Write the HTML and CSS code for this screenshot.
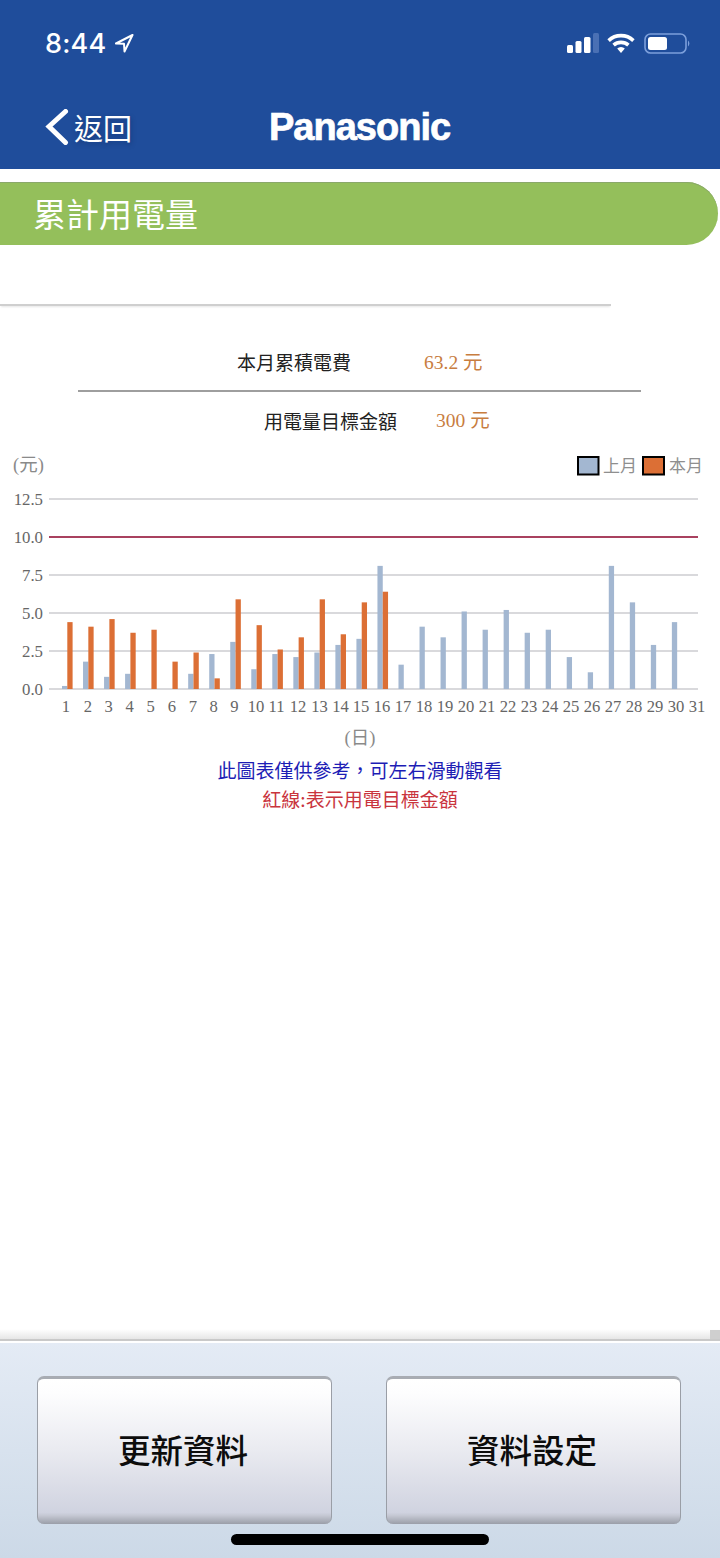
FILE: index.html
```html
<!DOCTYPE html>
<html lang="zh-Hant">
<head>
<meta charset="utf-8">
<title>累計用電量</title>
<link rel="stylesheet" href="styles.css">
</head>
<body>
<div class="app">
  <header class="header">
    <div class="status">
      <div class="status-left">
        <span class="time">8:44</span>
        <svg class="loc" width="20" height="19" viewBox="0 0 20 19"><path d="M18.5 1 L2 9.5 L10 9.8 L10.5 17.5 Z"/></svg>
      </div>
      <div class="status-right">
        <svg class="signal" width="33" height="20" viewBox="0 0 33 20">
          <rect class="on" x="1" y="12" width="6" height="8" rx="1.5"/>
          <rect class="on" x="9.5" y="8" width="6" height="12" rx="1.5"/>
          <rect class="on" x="18" y="4" width="6.5" height="16" rx="1.5"/>
          <rect class="off" x="27" y="0" width="6" height="20" rx="1.5"/>
        </svg>
        <svg class="wifi" width="28" height="20" viewBox="0 0 28 20">
          <path class="arc" d="M1.6 7.6 A18 18 0 0 1 26.4 7.6"/>
          <path class="arc" d="M6.6 12.2 A11 11 0 0 1 21.4 12.2"/>
          <path class="dot" d="M10.2 15.6 L14 20 L17.8 15.6 A5.5 5.5 0 0 0 10.2 15.6 Z"/>
        </svg>
        <svg class="battery" width="47" height="21" viewBox="0 0 47 21">
          <rect class="shell" x="1" y="1" width="41" height="19" rx="5.5"/>
          <rect class="fill" x="4" y="4" width="19" height="13" rx="2.5"/>
          <path class="nub" d="M44 7.5 A4 4 0 0 1 44 13.5 Z"/>
        </svg>
      </div>
    </div>
    <nav class="nav">
      <div class="back">
        <svg class="chevron" width="24" height="36" viewBox="0 0 24 36"><path d="M20.5 2.5 L4 17.5 L20.5 33.5"/></svg>
        <span class="back-text">返回</span>
      </div>
      <div class="logo">Panasonic</div>
    </nav>
  </header>

  <main class="main">
    <h1 class="title">累計用電量</h1>
    <div class="panel"></div>
    <div class="summary">
      <div class="row row-first">
        <span class="label">本月累積電費</span>
        <span class="value">63.2 元</span>
      </div>
      <div class="rule"></div>
      <div class="row row-second">
        <span class="label">用電量目標金額</span>
        <span class="value">300 元</span>
      </div>
    </div>

    <svg class="chart" width="720" height="300" viewBox="0 450 720 300">
      <text class="axis-title" x="13" y="471">(元)</text>

      <rect class="swatch swatch-last" x="578" y="457" width="20.5" height="17.5"/>
      <text class="legend" x="603" y="472">上月</text>
      <rect class="swatch swatch-this" x="643" y="457" width="21" height="17.5"/>
      <text class="legend" x="669" y="472">本月</text>

      <line class="grid" x1="49" x2="698" y1="499" y2="499"/>
      <line class="goal" x1="49" x2="698" y1="537" y2="537"/>
      <line class="grid" x1="49" x2="698" y1="575" y2="575"/>
      <line class="grid" x1="49" x2="698" y1="613" y2="613"/>
      <line class="grid" x1="49" x2="698" y1="651" y2="651"/>
      <line class="grid" x1="49" x2="698" y1="689" y2="689"/>

      <text class="tick-y" x="43" y="505">12.5</text>
      <text class="tick-y" x="43" y="543">10.0</text>
      <text class="tick-y" x="43" y="581">7.5</text>
      <text class="tick-y" x="43" y="619">5.0</text>
      <text class="tick-y" x="43" y="657">2.5</text>
      <text class="tick-y" x="43" y="695">0.0</text>

      <g transform="translate(62 689) scale(21.03 -15.2)">
        <g class="bars-last">
          <rect x="0" y="0" width=".252" height="0.2"/>
          <rect x="1" y="0" width=".252" height="1.8"/>
          <rect x="2" y="0" width=".252" height="0.8"/>
          <rect x="3" y="0" width=".252" height="1.0"/>
          <rect x="6" y="0" width=".252" height="1.0"/>
          <rect x="7" y="0" width=".252" height="2.3"/>
          <rect x="8" y="0" width=".252" height="3.1"/>
          <rect x="9" y="0" width=".252" height="1.3"/>
          <rect x="10" y="0" width=".252" height="2.3"/>
          <rect x="11" y="0" width=".252" height="2.1"/>
          <rect x="12" y="0" width=".252" height="2.4"/>
          <rect x="13" y="0" width=".252" height="2.9"/>
          <rect x="14" y="0" width=".252" height="3.3"/>
          <rect x="15" y="0" width=".252" height="8.1"/>
          <rect x="16" y="0" width=".252" height="1.6"/>
          <rect x="17" y="0" width=".252" height="4.1"/>
          <rect x="18" y="0" width=".252" height="3.4"/>
          <rect x="19" y="0" width=".252" height="5.1"/>
          <rect x="20" y="0" width=".252" height="3.9"/>
          <rect x="21" y="0" width=".252" height="5.2"/>
          <rect x="22" y="0" width=".252" height="3.7"/>
          <rect x="23" y="0" width=".252" height="3.9"/>
          <rect x="24" y="0" width=".252" height="2.1"/>
          <rect x="25" y="0" width=".252" height="1.1"/>
          <rect x="26" y="0" width=".252" height="8.1"/>
          <rect x="27" y="0" width=".252" height="5.7"/>
          <rect x="28" y="0" width=".252" height="2.9"/>
          <rect x="29" y="0" width=".252" height="4.4"/>
        </g>
        <g class="bars-this">
          <rect x="0.252" y="0" width=".252" height="4.4"/>
          <rect x="1.252" y="0" width=".252" height="4.1"/>
          <rect x="2.252" y="0" width=".252" height="4.6"/>
          <rect x="3.252" y="0" width=".252" height="3.7"/>
          <rect x="4.252" y="0" width=".252" height="3.9"/>
          <rect x="5.252" y="0" width=".252" height="1.8"/>
          <rect x="6.252" y="0" width=".252" height="2.4"/>
          <rect x="7.252" y="0" width=".252" height="0.7"/>
          <rect x="8.252" y="0" width=".252" height="5.9"/>
          <rect x="9.252" y="0" width=".252" height="4.2"/>
          <rect x="10.252" y="0" width=".252" height="2.6"/>
          <rect x="11.252" y="0" width=".252" height="3.4"/>
          <rect x="12.252" y="0" width=".252" height="5.9"/>
          <rect x="13.252" y="0" width=".252" height="3.6"/>
          <rect x="14.252" y="0" width=".252" height="5.7"/>
          <rect x="15.252" y="0" width=".252" height="6.4"/>
        </g>
      </g>

      <g class="tick-x">
        <text x="66" y="712">1</text><text x="88" y="712">2</text><text x="108.6" y="712">3</text><text x="129.6" y="712">4</text><text x="150.6" y="712">5</text><text x="172" y="712">6</text><text x="193" y="712">7</text><text x="213.6" y="712">8</text><text x="234.4" y="712">9</text><text x="256" y="712">10</text><text x="276.5" y="712">11</text><text x="298" y="712">12</text><text x="319.5" y="712">13</text><text x="340.5" y="712">14</text><text x="361" y="712">15</text><text x="382" y="712">16</text><text x="403" y="712">17</text><text x="424" y="712">18</text><text x="445" y="712">19</text><text x="466" y="712">20</text><text x="487" y="712">21</text><text x="508" y="712">22</text><text x="529" y="712">23</text><text x="550" y="712">24</text><text x="571" y="712">25</text><text x="592" y="712">26</text><text x="613" y="712">27</text><text x="634" y="712">28</text><text x="655" y="712">29</text><text x="676" y="712">30</text><text x="697" y="712">31</text>
      </g>
      <text class="axis-title axis-title-x" x="360" y="744">(日)</text>
    </svg>

    <p class="note note-blue">此圖表僅供參考，可左右滑動觀看</p>
    <p class="note note-red">紅線:表示用電目標金額</p>
  </main>

  <div class="scroll-edge"><span class="scroll-thumb"></span></div>
  <footer class="footer">
    <button class="btn" type="button">更新資料</button>
    <button class="btn" type="button">資料設定</button>
    <span class="home"></span>
  </footer>
</div>
</body>
</html>
```

FILE: styles.css
```css
* { box-sizing: border-box; }
html, body { margin: 0; padding: 0; background: #fff; }
body { font-family: "Noto Sans CJK TC", "Noto Sans", sans-serif; }

.app {
  width: 720px;
  height: 1558px;
  display: flex;
  flex-direction: column;
  overflow: hidden;
}

/* Header */
.header {
  height: 169px;
  flex: none;
  background: #1f4d9b;
  color: #fff;
  padding: 0 29px 0 45px;
}
.status {
  height: 88px;
  display: flex;
  justify-content: space-between;
  padding-top: 27px;
}
.status-left { display: flex; align-items: flex-start; gap: 8px; height: 34px; }
.time {
  font-family: Inter, Roboto, sans-serif;
  font-size: 27px;
  font-weight: 500;
  line-height: 34px;
  letter-spacing: .2px;
}
.loc { margin-top: 7px; }
.loc path { fill: none; stroke: #fff; stroke-width: 2; stroke-linejoin: round; }
.status-right { display: flex; align-items: flex-start; gap: 8px; padding-top: 6px; }
.signal .on { fill: #fff; }
.signal .off { fill: #4a70b4; }
.wifi .arc { fill: none; stroke: #fff; stroke-width: 3.6; }
.wifi .dot { fill: #fff; }
.battery { margin-left: 1px; }
.battery .shell { fill: none; stroke: #7c9fdb; stroke-width: 1.6; }
.battery .fill { fill: #fff; }
.battery .nub { fill: #7c9fdb; }

.nav { position: relative; height: 80px; display: flex; align-items: flex-start; }
.back { display: flex; align-items: center; height: 78px; }
.chevron { margin-right: 5px; }
.chevron path { fill: none; stroke: #fff; stroke-width: 5; stroke-linecap: round; stroke-linejoin: miter; }
.back-text {
  font-size: 29px;
  line-height: 40px;
  text-shadow: 1px 2px 5px rgba(10, 30, 70, .35);
}
.logo {
  position: absolute;
  left: 224px;
  top: 16px;
  font-family: "Liberation Sans", Arial, sans-serif;
  font-weight: 700;
  font-size: 38px;
  line-height: 46px;
  letter-spacing: -1px;
  -webkit-text-stroke: .7px #fff;
}

/* Main */
.main { flex: 1; min-height: 0; padding-top: 13px; }
.title {
  margin: 0;
  width: 718px;
  height: 63px;
  padding-left: 33px;
  background: #94bf5b;
  border-radius: 0 32px 32px 0;
  color: #fff;
  font-size: 33px;
  font-weight: 400;
  line-height: 63px;
  box-shadow: inset 0 1px 0 #8aa86a;
}
.panel {
  width: 611px;
  height: 61px;
  border-bottom: 2px solid #cfcfcf;
  box-shadow: 0 2px 2px -1px rgba(0, 0, 0, .1);
  clip-path: inset(0 0 -4px 0);
}

.summary { height: 144px; padding-top: 41px; }
.row { position: relative; height: 30px; font-size: 19px; line-height: 30px; }
.row .label { color: #222; position: absolute; top: 0; white-space: nowrap; }
.row .value {
  color: #c87d3f;
  font-family: "Liberation Serif", "Noto Sans CJK TC", serif;
  font-size: 19.5px;
  position: absolute;
  top: 1px;
  white-space: nowrap;
}
.row-second .value { top: 0; }
.row-first .label { left: 237px; }
.row-first .value { left: 424px; }
.row-second .label { left: 264px; }
.row-second .value { left: 436px; }
.rule {
  width: 563px;
  height: 2px;
  margin: 13px 0 14px 78px;
  background: #9e9e9e;
}

/* Chart */
.chart { display: block; margin-bottom: 5px; }
.chart text { font-family: "Liberation Serif", "Noto Sans CJK TC", serif; }
.grid { stroke: #cdcdd1; stroke-width: 1.3; }
.goal { stroke: #a9415f; stroke-width: 1.8; }
.bars-last rect { fill: #a3b7d1; }
.bars-this rect { fill: #dc6f35; }
.chart .axis-title { font-size: 18.5px; fill: #8a8a8a; }
.chart .axis-title-x { text-anchor: middle; }
.chart .legend { font-size: 17px; fill: #8f8f8f; font-family: "Noto Sans CJK TC", sans-serif; }
.swatch { stroke: #000; stroke-width: 2; }
.swatch-last { fill: #a3b7d1; }
.swatch-this { fill: #dc6f35; }
.chart .tick-y { font-size: 16.8px; fill: #666; text-anchor: end; }
.tick-x text { font-size: 16.6px; fill: #666; text-anchor: middle; }

.note {
  margin: 0;
  text-align: center;
  font-size: 19px;
  line-height: 29px;
}
.note-blue { color: #1d1db5; }
.note-red { color: #c9343d; }

/* Bottom */
.scroll-edge {
  position: relative;
  flex: none;
  height: 14px;
  background: linear-gradient(#ffffff 0, #e6e6e6 10px, #c9c9c9 10px, #c9c9c9 12px, #fff 12px);
}
.scroll-thumb {
  position: absolute;
  right: 0;
  top: 1px;
  width: 10px;
  height: 9px;
  background: #cfcfcf;
}
.footer {
  position: relative;
  flex: none;
  height: 215px;
  padding: 33px 39px 0 37px;
  display: flex;
  justify-content: space-between;
  align-items: flex-start;
  background: linear-gradient(#e4ebf5, #ccd9e7);
}
.btn {
  width: 295px;
  height: 148px;
  padding: 0 3px 6px 0;
  border: 1px solid #9a9ea6;
  border-top: 3px solid #a8acb3;
  border-bottom: none;
  border-radius: 7px;
  background: linear-gradient(#ffffff 0, #fdfdfe 10%, #e9eaf0 50%, #d0d3e0 92%, #c6c9d4 94%, #9a9ea8 100%);
  color: #0c0c0c;
  font-family: "Noto Sans CJK TC", sans-serif;
  font-size: 32.5px;
  font-weight: 500;
  line-height: 40px;
}
.home {
  position: absolute;
  left: 231px;
  top: 191px;
  width: 258px;
  height: 11px;
  background: #000;
  border-radius: 6px;
}
```
